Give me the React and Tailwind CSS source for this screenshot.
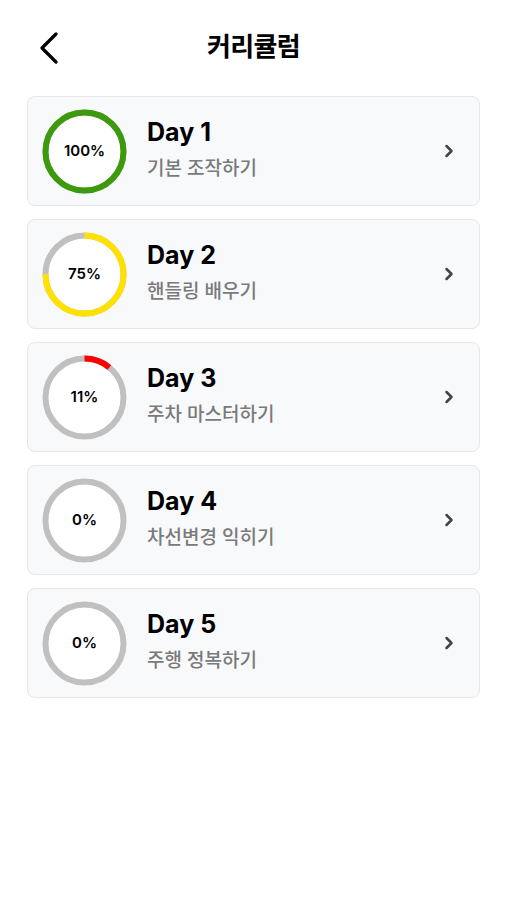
import { ChevronRight } from "lucide-react";

const days = [
  { day: 1, title: "기본 조작하기", pct: 100, color: "#3c9a0c" },
  { day: 2, title: "핸들링 배우기", pct: 75, color: "#ffe100" },
  { day: 3, title: "주차 마스터하기", pct: 11, color: "#ff0000" },
  { day: 4, title: "차선변경 익히기", pct: 0, color: "#c0c0c0" },
  { day: 5, title: "주행 정복하기", pct: 0, color: "#c0c0c0" },
];

function Ring({ pct, color }) {
  const r = 39;
  const c = 2 * Math.PI * r;
  return (
    <div className="relative w-[85px] h-[85px] shrink-0">
      <svg width="85" height="85" viewBox="0 0 85 85" className="-rotate-90">
        <circle cx="42.5" cy="42.5" r={r} fill="#fff" stroke="#c0c0c0" strokeWidth="6" />
        {pct > 0 && (
          <circle
            cx="42.5"
            cy="42.5"
            r={r}
            fill="none"
            stroke={color}
            strokeWidth="6"
            strokeDasharray={`${(c * pct) / 100} ${c}`}
          />
        )}
      </svg>
      <span className="absolute inset-0 flex items-center justify-center text-[15px] font-semibold text-black">
        {pct}%
      </span>
    </div>
  );
}

export default function App() {
  return (
    <div
      className="min-h-screen bg-white px-[27px]"
      style={{ fontFamily: "Inter, 'Noto Sans CJK KR', sans-serif" }}
    >
      <header className="relative flex items-center justify-center h-[96px] pb-[4px]">
        <button className="absolute left-[12px] top-[32px] text-black">
          <svg width="20" height="32" viewBox="0 0 20 32" fill="none">
            <path d="M17 2 L3 16 L17 30" stroke="currentColor" strokeWidth="3.2" strokeLinecap="round" strokeLinejoin="round" />
          </svg>
        </button>
        <h1 className="text-[26px] font-bold text-black tracking-tight">커리큘럼</h1>
      </header>

      <div className="flex flex-col gap-[13px]">
        {days.map((d) => (
          <div
            key={d.day}
            className="flex items-center h-[110px] pl-[14px] pr-[20px] bg-[#f8f9fa] border border-[#e4e6e8] rounded-[8px]"
          >
            <Ring pct={d.pct} color={d.color} />
            <div className="flex-1 ml-[20px] flex flex-col gap-[8px] pb-[4px]">
              <span className="text-[25px] font-bold text-black leading-[32px]">Day {d.day}</span>
              <span className="text-[19px] font-medium text-[#7a7a7a] leading-[26px]">{d.title}</span>
            </div>
            <ChevronRight size={20} strokeWidth={3} className="text-[#444]" />
          </div>
        ))}
      </div>
    </div>
  );
}
